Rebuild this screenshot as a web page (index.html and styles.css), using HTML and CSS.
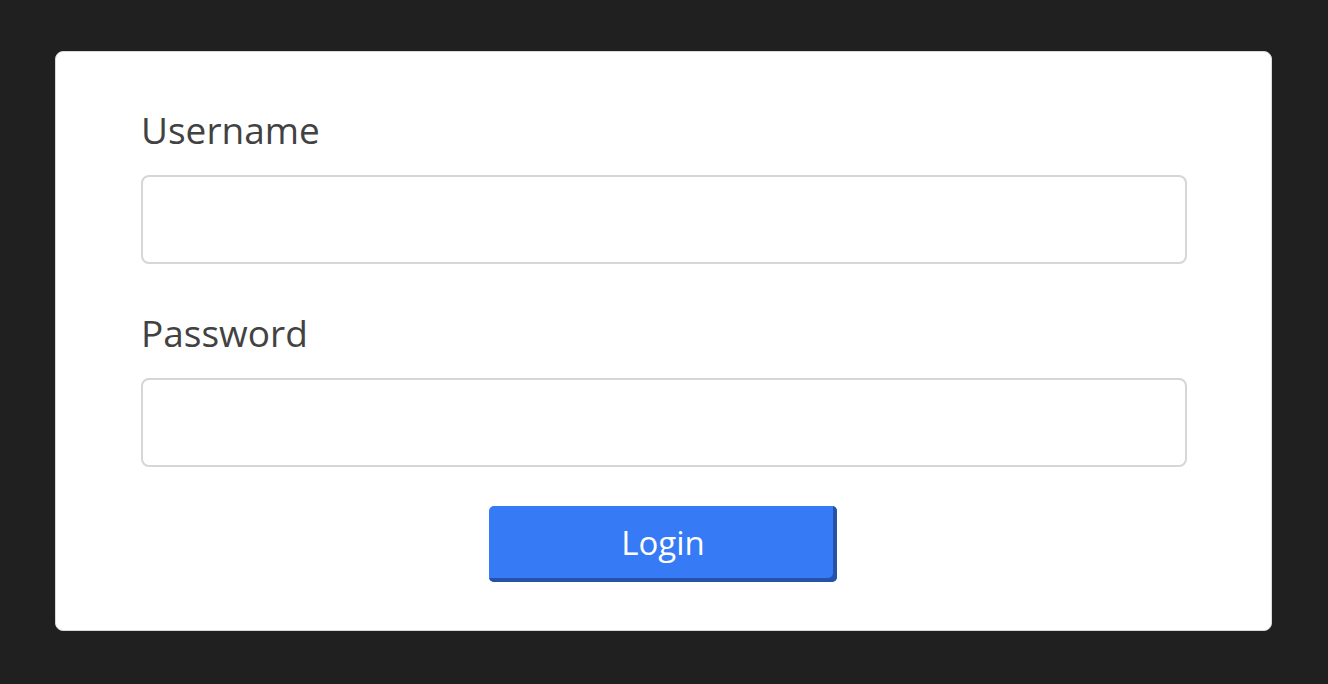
FILE: index.html
```html
<!DOCTYPE html>
<html>
<head>
    <title>Login</title>
    <link rel="stylesheet" href="styles.css">
</head>
<body>
    <div class="card">
        <form class="login-form" onsubmit="return false;">
            <label class="field-label" for="username">Username</label>
            <input class="field-input" id="username" type="text">

            <label class="field-label" for="password">Password</label>
            <input class="field-input" id="password" type="password">

            <div class="actions">
                <button class="login-btn" type="submit">Login</button>
            </div>
        </form>
    </div>
</body>
</html>
```

FILE: styles.css
```css
body {
    margin: 0;
    background-color: #202020;
    font-family: 'Open Sans', sans-serif;
    height: 100vh;
}

.card {
    margin: 51px 56px 0 55px;
    height: 580px;
    box-sizing: border-box;
    background: white;
    border: 1px solid #d8d8d8;
    border-radius: 8px;
    padding: 50px 84px 0 85px;
}

.login-form {
    display: flex;
    flex-direction: column;
}

.field-label {
    color: #424242;
    font-size: 37px;
    line-height: 56px;
    margin-bottom: 17px;
}

.field-input {
    height: 89px;
    box-sizing: border-box;
    border: 2px solid #d6d6d9;
    border-radius: 8px;
    margin: 0 0 41px 0;
    font-size: 32px;
    padding: 0 16px;
    font-family: 'Open Sans', sans-serif;
}

.field-input:last-of-type {
    margin-bottom: 0;
}

.actions {
    display: flex;
    justify-content: center;
    margin-top: 39px;
    padding-right: 2px;
}

.login-btn {
    width: 348px;
    height: 76px;
    background-color: #367bf5;
    color: white;
    font-family: 'Open Sans', sans-serif;
    font-size: 33px;
    border: none;
    border-radius: 5px;
    box-shadow: inset -4px -4px 0 #2453a8;
    padding: 0 0 4px 0;
    cursor: pointer;
}
```
